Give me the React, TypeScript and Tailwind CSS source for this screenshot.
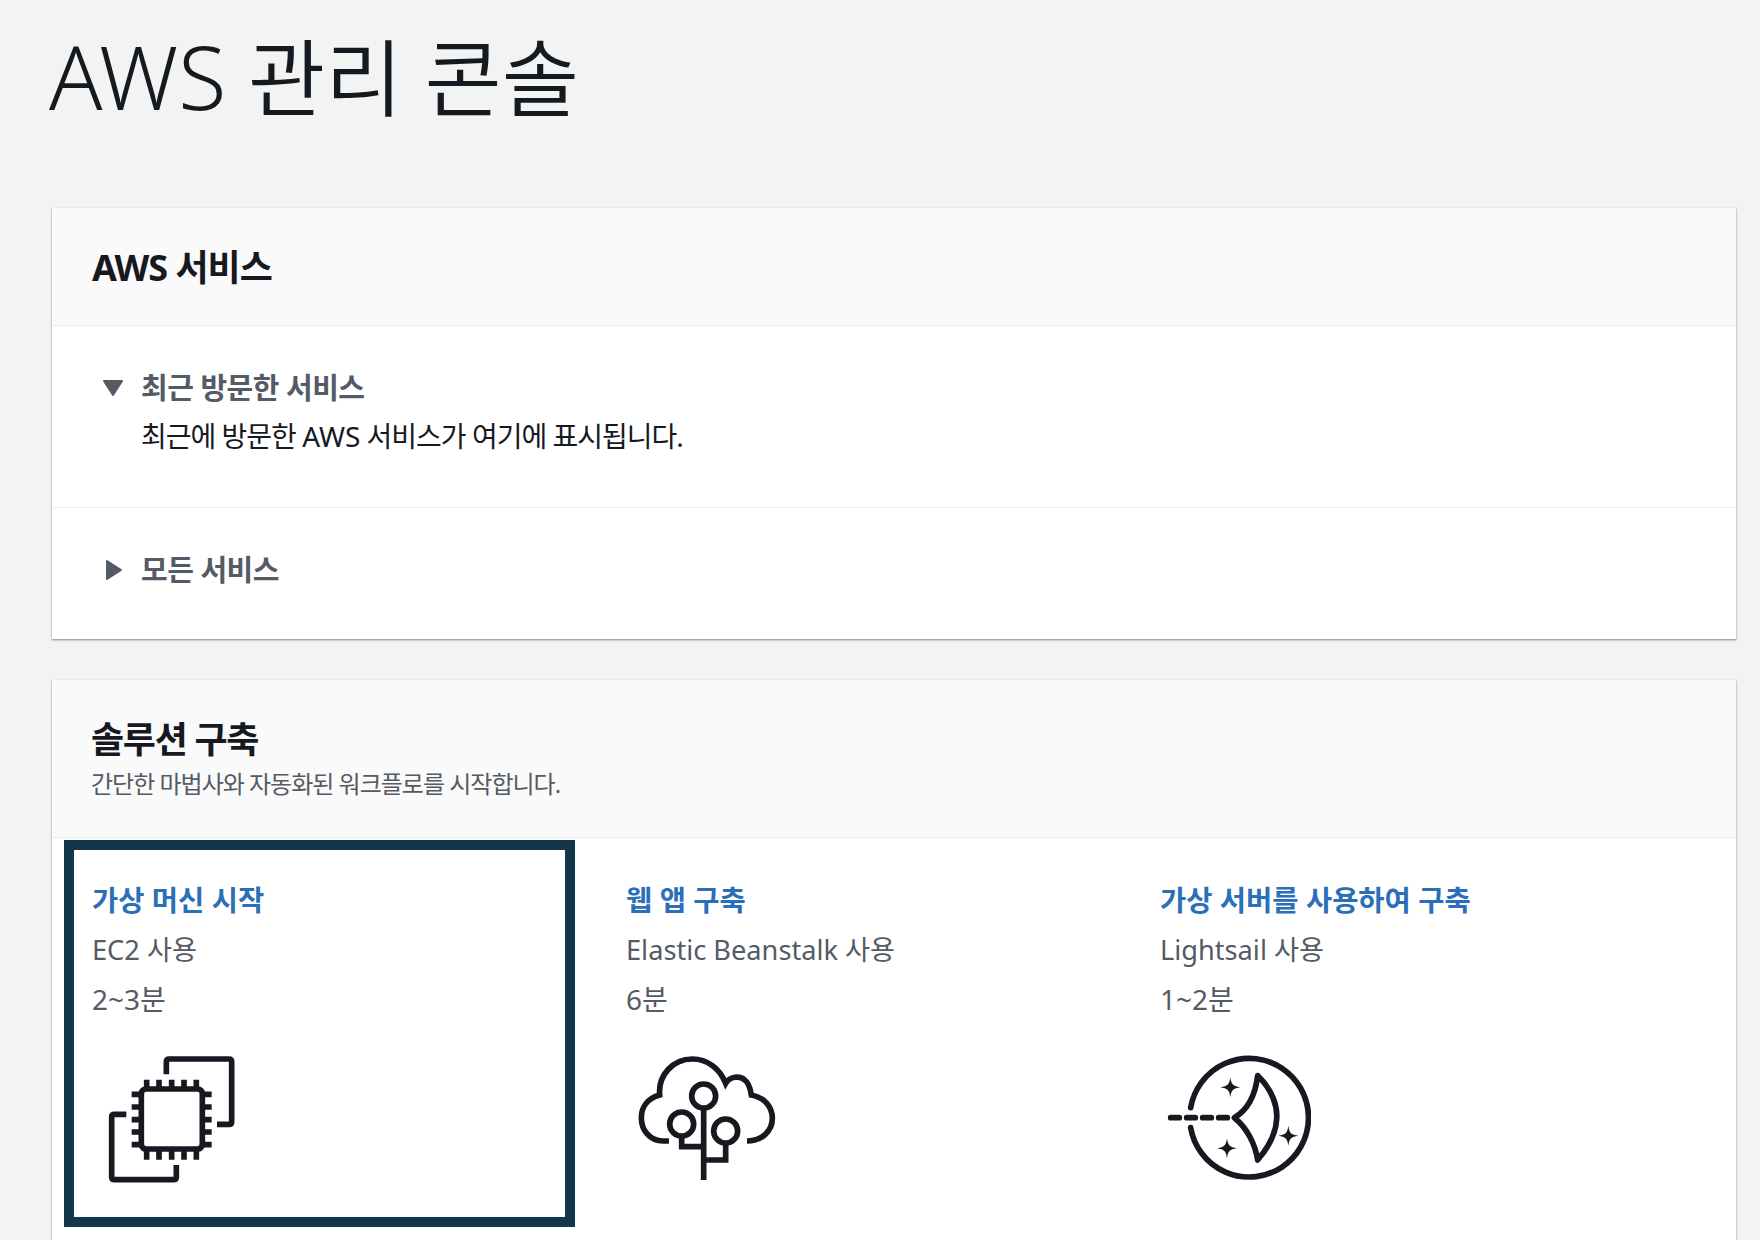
import { ReactNode } from 'react';

const font = { fontFamily: '"Noto Sans", "Noto Sans CJK KR", sans-serif' };

const star = (x: number, y: number) =>
  `M${x} ${y - 30}C${x + 3} ${y - 8} ${x + 8} ${y - 3} ${x + 30} ${y}C${x + 8} ${y + 3} ${x + 3} ${y + 8} ${x} ${y + 30}C${x - 3} ${y + 8} ${x - 8} ${y + 3} ${x - 30} ${y}C${x - 8} ${y - 3} ${x - 3} ${y - 8} ${x} ${y - 30}Z`;

const pinsX = [171, 208, 246, 283, 320];
const pinsY = [188, 226, 264, 301, 339];

const Ec2Icon = () => (
  <svg width="130" height="130" viewBox="55 70 390 390" fill="none" stroke="#16191f" strokeWidth="17">
    <path d="M230 128V90Q230 82 238 82H418Q426 82 426 90V270Q426 278 418 278H382" />
    <path d="M110 248H74Q66 248 66 256V436Q66 444 74 444H252Q260 444 260 436V400" />
    <rect x="155" y="172" width="183" height="180" rx="14" />
    {pinsX.map((x) => (
      <path key={x} d={`M${x} 144V172M${x} 352V384`} />
    ))}
    {pinsY.map((y) => (
      <path key={y} d={`M126 ${y}H155M338 ${y}H366`} />
    ))}
  </svg>
);

const BeanstalkIcon = () => (
  <svg width="140" height="130" viewBox="55 70 420 390" fill="none" stroke="#16191f" strokeWidth="17">
    <circle cx="252" cy="193" r="36" />
    <circle cx="186" cy="277" r="36" />
    <circle cx="318" cy="298" r="36" />
    <path d="M252 230V445M186 313V345H252M318 334V385H252" />
    <path d="M148 328H130C90 328 65 295 65 258C65 225 85 200 120 190C115 130 160 82 218 82C262 82 300 110 318 155C330 135 360 130 375 145C390 155 392 175 395 190C435 198 458 225 458 260C458 300 425 328 382 328" />
  </svg>
);

const LightsailIcon = () => (
  <svg width="145" height="130" viewBox="50 70 435 390" fill="none" stroke="#16191f" strokeWidth="17" strokeLinecap="round" strokeLinejoin="round">
    <path d="M124 228A178 178 0 1 1 124 288" />
    <path d="M64 258H90M112 258H138M160 258H186M208 258H234" />
    <path d="M325 132C370 175 385 225 382 262C380 310 355 350 325 385C318 340 295 290 255 258C295 235 318 190 325 132Z" />
    <path d={star(243, 167)} fill="#16191f" stroke="none" />
    <path d={star(233, 350)} fill="#16191f" stroke="none" />
    <path d={star(417, 312)} fill="#16191f" stroke="none" />
  </svg>
);

const Wizard = ({
  title,
  sub,
  time,
  icon,
  iconClass,
  selected,
}: {
  title: string;
  sub: string;
  time: string;
  icon: ReactNode;
  iconClass: string;
  selected?: boolean;
}) => (
  <div
    className={
      selected
        ? 'mr-[23px] h-[387px] border-[10px] border-[#14364a] pl-[18px] pt-[30px]'
        : 'mr-[23px] h-[387px] border-[10px] border-transparent pl-[18px] pt-[30px]'
    }
  >
    <div className="text-[28.5px] leading-[40px] font-bold text-[#2a6fb8] whitespace-nowrap">{title}</div>
    <div className="mt-[10px] text-[27.2px] leading-[40px] text-[#545b64] whitespace-nowrap">{sub}</div>
    <div className="mt-[9px] text-[28px] leading-[40px] text-[#545b64]">{time}</div>
    <div className={iconClass}>{icon}</div>
  </div>
);

export default function App() {
  return (
    <div className="h-[1240px] overflow-hidden bg-[#f2f3f3] text-[#16191f]" style={font}>
      <h1 className="pl-[49px] pt-[26px] text-[84px] leading-[104px] font-[350]">
        <span className="text-[88px] leading-none">AWS</span> 관리 콘솔
      </h1>

      <div className="ml-[52px] mr-[24px] mt-[78px] bg-white shadow-[0_1px_2px_rgba(0,28,36,0.5)]">
        <div className="flex h-[118px] items-center border-b border-[#eaeded] bg-[#fafafa] pl-[40px] pt-[2px] text-[36px] font-bold tracking-[-1px]">
          AWS 서비스
        </div>
        <div className="h-[182px] border-b border-[#eaeded] pl-[50px] pt-[42px]">
          <div className="flex items-center">
            <svg width="22" height="18" viewBox="0 0 22 18" className="mr-[17px]">
              <path d="M2 2h18L11 16z" fill="#545b64" stroke="#545b64" strokeWidth="2" strokeLinejoin="round" />
            </svg>
            <span className="text-[29px] leading-[40px] font-bold tracking-[-0.5px] text-[#545b64]">최근 방문한 서비스</span>
          </div>
          <div className="mt-[8px] pl-[39px] text-[28px] leading-[40px] tracking-[-1px]">
            최근에 방문한 <span className="tracking-normal">AWS</span> 서비스가 여기에 표시됩니다.
          </div>
        </div>
        <div className="h-[131px] pl-[53px] pt-[42px]">
          <div className="flex items-center">
            <svg width="18" height="22" viewBox="0 0 18 22" className="mr-[18px]">
              <path d="M2 2v18l14-9z" fill="#545b64" stroke="#545b64" strokeWidth="2" strokeLinejoin="round" />
            </svg>
            <span className="text-[29px] leading-[40px] font-bold tracking-[-0.5px] text-[#545b64]">모든 서비스</span>
          </div>
        </div>
      </div>

      <div className="ml-[52px] mr-[24px] mt-[41px] h-[600px] bg-white shadow-[0_1px_2px_rgba(0,28,36,0.5)]">
        <div className="h-[158px] border-b border-[#eaeded] bg-[#fafafa] pl-[39px] pt-[35px]">
          <div className="text-[36px] leading-[50px] font-bold tracking-[-1.3px]">솔루션 구축</div>
          <div className="mt-[2px] text-[24px] leading-[34px] tracking-[-1px] text-[#545b64]">
            간단한 마법사와 자동화된 워크플로를 시작합니다.
          </div>
        </div>
        <div className="mt-[2px] grid grid-cols-[534px_534px_534px] pl-[12px]">
          <Wizard selected title="가상 머신 시작" sub="EC2 사용" time="2~3분" icon={<Ec2Icon />} iconClass="mt-[36px] ml-[16px]" />
          <Wizard title="웹 앱 구축" sub="Elastic Beanstalk 사용" time="6분" icon={<BeanstalkIcon />} iconClass="mt-[36px] ml-[12px]" />
          <Wizard title="가상 서버를 사용하여 구축" sub="Lightsail 사용" time="1~2분" icon={<LightsailIcon />} iconClass="mt-[36px] ml-[6px]" />
        </div>
      </div>
    </div>
  );
}
